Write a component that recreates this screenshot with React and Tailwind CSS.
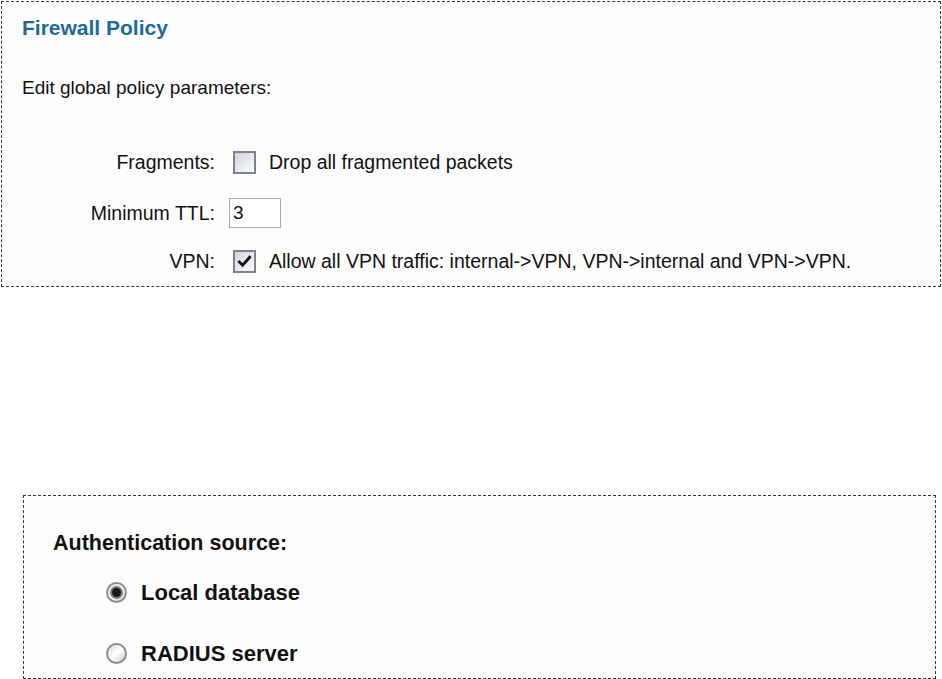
import React from 'react';

const font = { fontFamily: 'Tahoma, "Liberation Sans", Arial, sans-serif' };

function CheckBox({ checked }) {
  return (
    <div className="w-[23px] h-[23px] border-2 border-[#7d8290] bg-gradient-to-br from-[#d0d3da] to-white p-[2px] flex items-center justify-center shrink-0">
      {checked && (
        <svg viewBox="0 0 16 16" className="w-[17px] h-[17px]">
          <path d="M2.5 8.5 L6 12 L13.5 3.5" fill="none" stroke="#111" strokeWidth="3" strokeLinecap="square" />
        </svg>
      )}
    </div>
  );
}

function Radio({ checked }) {
  return (
    <div className="w-[21px] h-[21px] rounded-full border-2 border-[#8e8e8e] bg-gradient-to-br from-[#dcdcdc] via-white to-[#cfcfcf] flex items-center justify-center shrink-0">
      {checked && <div className="w-[9px] h-[9px] rounded-full bg-[#1a1a1a] ring-2 ring-[#7a7a7a]" />}
    </div>
  );
}

export default function App() {
  return (
    <div className="w-[942px] h-[679px] bg-white text-[#111]" style={font}>
      {/* Firewall policy panel */}
      <div className="ml-[1px] mt-[1px] w-[940px] h-[286px] border border-dashed border-[#333] bg-[#fdfdfd] pl-[20px] pt-[15px]">
        <h1 className="text-[21px] leading-[22px] font-bold text-[#1d6a99]">Firewall Policy</h1>
        <p className="mt-[39px] text-[19px] leading-[20px]">Edit global policy parameters:</p>

        <div className="mt-[52px] -ml-[20px] flex flex-col text-[19.5px] leading-[20px]">
          <div className="flex items-center h-[24px]">
            <span className="w-[213px] text-right">Fragments:</span>
            <span className="ml-[18px]"><CheckBox /></span>
            <span className="ml-[13px]">Drop all fragmented packets</span>
          </div>
          <div className="flex items-center h-[30px] mt-[24px]">
            <span className="w-[213px] text-right">Minimum TTL:</span>
            <input
              readOnly
              value="3"
              className="ml-[14px] w-[52px] h-[30px] border border-[#a5acb5] bg-white px-[3px] text-[19px] outline-none"
              style={font}
            />
          </div>
          <div className="flex items-center h-[24px] mt-[21px]">
            <span className="w-[213px] text-right">VPN:</span>
            <span className="ml-[18px]"><CheckBox checked /></span>
            <span className="ml-[13px]">Allow all VPN traffic: internal-&gt;VPN, VPN-&gt;internal and VPN-&gt;VPN.</span>
          </div>
        </div>
      </div>

      {/* Authentication panel */}
      <div className="ml-[23px] mt-[208px] w-[913px] h-[184px] border border-dashed border-[#333] bg-[#fdfdfd] pl-[29px] pt-[36px]">
        <p className="text-[21.5px] leading-[22px] font-bold">Authentication source:</p>
        <div className="mt-[26px] ml-[53px] flex items-center h-[24px] text-[22px] font-bold">
          <Radio checked />
          <span className="ml-[14px]">Local database</span>
        </div>
        <div className="mt-[37px] ml-[53px] flex items-center h-[24px] text-[22px] font-bold">
          <Radio />
          <span className="ml-[14px]">RADIUS server</span>
        </div>
      </div>
    </div>
  );
}
